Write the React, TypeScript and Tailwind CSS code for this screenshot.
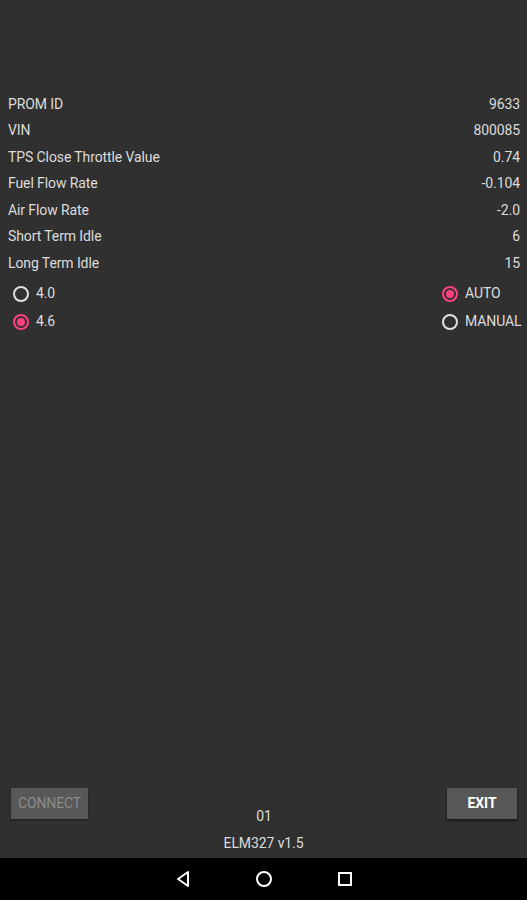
import React, { useState } from "react";

const rows = [
  { label: "PROM ID", value: "9633" },
  { label: "VIN", value: "800085" },
  { label: "TPS Close Throttle Value", value: "0.74" },
  { label: "Fuel Flow Rate", value: "-0.104" },
  { label: "Air Flow Rate", value: "-2.0" },
  { label: "Short Term Idle", value: "6" },
  { label: "Long Term Idle", value: "15" },
];

function Radio({ checked }: { checked: boolean }) {
  return (
    <span
      className={`flex items-center justify-center w-[16px] h-[16px] rounded-full border-2 ${
        checked ? "border-[#ff4081]" : "border-[#e0e0e0]"
      }`}
    >
      {checked && <span className="w-[8px] h-[8px] rounded-full bg-[#ff4081]" />}
    </span>
  );
}

export default function App() {
  const [engine, setEngine] = useState("4.6");
  const [mode, setMode] = useState("AUTO");

  return (
    <div
      className="w-[527px] h-[900px] flex flex-col bg-[#303030] text-[#dcdcdc] text-[14px] tracking-[-0.1px]"
      style={{ fontFamily: "Roboto, 'Liberation Sans', sans-serif" }}
    >
      {/* Data */}
      <div className="flex-1 pt-[91px]">
        {rows.map((r) => (
          <div key={r.label} className="flex justify-between items-center h-[26.5px] pl-[8px] pr-[7px]">
            <span>{r.label}</span>
            <span>{r.value}</span>
          </div>
        ))}

        {/* Radio groups */}
        <div className="flex justify-between mt-[3px] pl-[13px] pr-[5px]">
          <div className="flex flex-col">
            {["4.0", "4.6"].map((v) => (
              <button
                key={v}
                onClick={() => setEngine(v)}
                className="flex items-center gap-[7px] h-[28px]"
              >
                <Radio checked={engine === v} />
                <span>{v}</span>
              </button>
            ))}
          </div>
          <div className="flex flex-col w-[80px]">
            {["AUTO", "MANUAL"].map((v) => (
              <button
                key={v}
                onClick={() => setMode(v)}
                className="flex items-center gap-[7px] h-[28px]"
              >
                <Radio checked={mode === v} />
                <span>{v}</span>
              </button>
            ))}
          </div>
        </div>
      </div>

      {/* Footer */}
      <div className="grid grid-cols-[1fr_auto_1fr] items-start pl-[11px] pr-[10px]">
        <button
          disabled
          className="w-[77px] h-[31px] bg-[#585858] text-[#8c8c8c] text-[14px] shadow-[0_1px_2px_rgba(0,0,0,0.4)]"
        >
          CONNECT
        </button>
        <span className="mt-[20px] leading-[17px]">01</span>
        <button className="justify-self-end w-[70px] h-[31px] bg-[#575757] text-white font-bold text-[14px] shadow-[0_2px_3px_rgba(0,0,0,0.5)]">
          EXIT
        </button>
      </div>
      <div className="text-center leading-[17px] mt-[9.5px] mb-[6.5px]">ELM327 v1.5</div>

      {/* Navigation bar */}
      <div className="h-[42px] bg-black flex items-center justify-center gap-[63px]">
        <svg width="18" height="18" viewBox="0 0 18 18" fill="none" stroke="#fff" strokeWidth="2" strokeLinejoin="round">
          <path d="M14 2 L4 9 L14 16 Z" />
        </svg>
        <svg width="18" height="18" viewBox="0 0 18 18" fill="none" stroke="#fff" strokeWidth="2">
          <circle cx="9" cy="9" r="7" />
        </svg>
        <svg width="18" height="18" viewBox="0 0 18 18" fill="none" stroke="#fff" strokeWidth="2">
          <rect x="3" y="3" width="12" height="12" />
        </svg>
      </div>
    </div>
  );
}
